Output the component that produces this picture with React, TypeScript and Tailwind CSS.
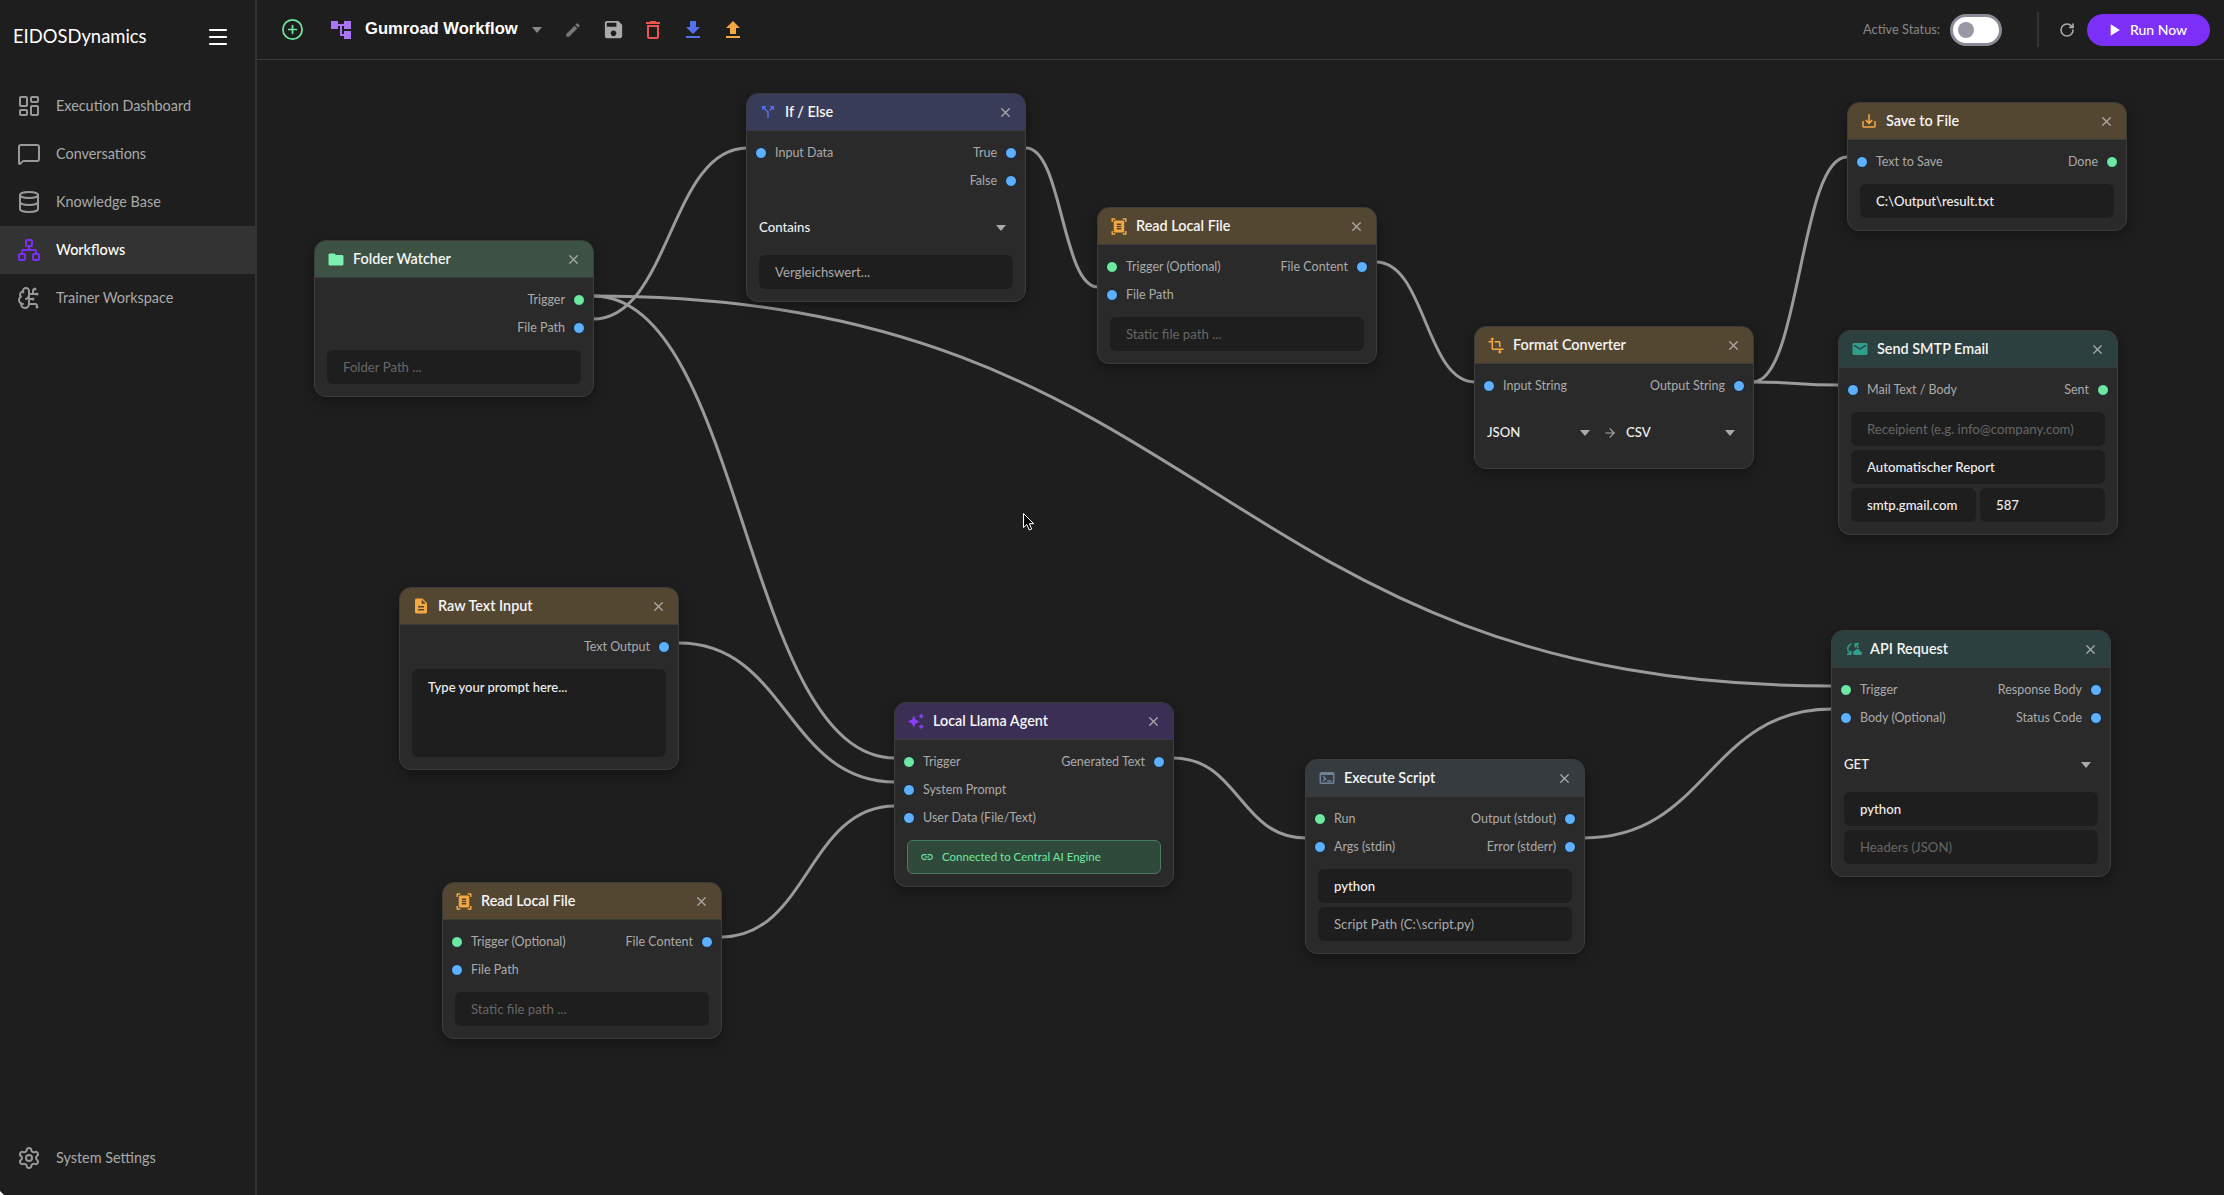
import type { ReactNode } from "react";
import {
  LayoutDashboard,
  MessageSquare,
  Database,
  Network,
  BrainCircuit,
  Settings,
  CirclePlus,
  Menu,
  RotateCw,
  X,
  ArrowRight,
} from "lucide-react";
import {
  MdAccountTree,
  MdEdit,
  MdSave,
  MdDeleteOutline,
  MdFileDownload,
  MdFileUpload,
  MdFolder,
  MdCallSplit,
  MdDocumentScanner,
  MdTransform,
  MdSaveAlt,
  MdDescription,
  MdAutoAwesome,
  MdEmail,
  MdCloudSync,
  MdTerminal,
  MdPlayArrow,
  MdLink,
} from "react-icons/md";

const navItems = [
  { label: "Execution Dashboard", icon: LayoutDashboard },
  { label: "Conversations", icon: MessageSquare },
  { label: "Knowledge Base", icon: Database },
  { label: "Workflows", icon: Network, active: true },
  { label: "Trainer Workspace", icon: BrainCircuit },
];

// page coordinates of each connection: start and end of the cubic
const edges = [
  [593, 296, 895, 758],
  [593, 296, 1832, 686],
  [593, 319, 747, 148],
  [1026, 148, 1098, 287],
  [1376, 262, 1475, 382],
  [1753, 382, 1847, 157],
  [1753, 382, 1838, 385],
  [679, 643, 895, 782],
  [721, 937, 895, 806],
  [1173, 758, 1306, 838],
  [1584, 838, 1832, 709],
];

function Port({ color }: { color: "green" | "blue" }) {
  return (
    <span
      className={`w-3 h-3 rounded-full border border-[#16202a] shrink-0 ${color === "green" ? "bg-[#6ee7a0]" : "bg-[#5cb0ff]"}`}
    />
  );
}

type RowProps = {
  left?: string;
  leftPort?: "green" | "blue";
  right?: string;
  rightPort?: "green" | "blue";
};

function Row({ left, leftPort = "blue", right, rightPort = "blue" }: RowProps) {
  return (
    <div className="h-7 flex items-center justify-between text-[12.5px] text-[#aaaaaa]">
      <div className="flex items-center gap-2 -ml-[4px]">
        {left && (
          <>
            <Port color={leftPort} />
            <span>{left}</span>
          </>
        )}
      </div>
      <div className="flex items-center gap-2 -mr-[4px]">
        {right && (
          <>
            <span>{right}</span>
            <Port color={rightPort} />
          </>
        )}
      </div>
    </div>
  );
}

function Field({
  children,
  tone = "value",
  className = "",
}: {
  children: ReactNode;
  tone?: "value" | "muted" | "hint";
  className?: string;
}) {
  const toneClass =
    tone === "value"
      ? "text-[#f0f0f0] font-medium"
      : tone === "muted"
        ? "text-[#aaaaaa]"
        : "text-[#666666]";
  return (
    <div
      className={`h-[34px] rounded-md bg-[#1e1e1e] pl-4 pt-[2px] flex items-center text-[13.2px] ${toneClass} ${className}`}
    >
      {children}
    </div>
  );
}

function Caret() {
  return (
    <span className="w-0 h-0 border-x-[5px] border-x-transparent border-t-[6px] border-t-[#aaaaaa]" />
  );
}

function Select({ label, className = "" }: { label: string; className?: string }) {
  return (
    <div
      className={`h-[34px] flex items-center justify-between text-[13.2px] font-medium text-[#f0f0f0] pr-[7px] ${className}`}
    >
      {label}
      <Caret />
    </div>
  );
}

function Node({
  title,
  icon,
  header,
  className,
  children,
}: {
  title: string;
  icon: ReactNode;
  header: string;
  className: string;
  children: ReactNode;
}) {
  return (
    <div
      className={`absolute w-[280px] rounded-xl border border-[#3c3c3c] bg-[#2a2a2a] shadow-[0_4px_12px_rgba(0,0,0,0.35)] overflow-hidden ${className}`}
    >
      <div
        className={`h-[37px] flex items-center px-[12px] border-b border-[#3c3c3c] ${header}`}
      >
        <span className="w-[18px] flex justify-center shrink-0">{icon}</span>
        <span className="ml-[8px] text-[14.4px] font-semibold text-[#f5f5f5] grow">
          {title}
        </span>
        <X size={15} strokeWidth={2} className="text-[#aaaaaa]" />
      </div>
      {children}
    </div>
  );
}

export default function App() {
  return (
    <div className="relative w-[2224px] h-[1195px] flex bg-[#1e1e1e] overflow-hidden font-['Lato',sans-serif]">
      {/* Sidebar */}
      <aside className="w-[257px] shrink-0 border-r-2 border-[#333333] flex flex-col">
        <div className="h-[74px] flex items-center justify-between pl-[13px] pr-[25px]">
          <span className="text-[18.4px] text-white">EIDOSDynamics</span>
          <Menu size={24} strokeWidth={2.2} className="text-white" />
        </div>
        <nav className="mt-[8px] flex flex-col">
          {navItems.map((item) => (
            <div
              key={item.label}
              className={`h-12 flex items-center pl-[17px] text-[14.4px] ${item.active ? "bg-[#333333] text-white font-medium" : "text-[#aaaaaa]"}`}
            >
              <item.icon
                size={24}
                strokeWidth={2}
                className={item.active ? "text-[#7c2df7]" : "text-[#999999]"}
              />
              <span className="ml-[15px]">{item.label}</span>
            </div>
          ))}
        </nav>
        <div className="mt-auto h-12 mb-[13px] flex items-center pl-[17px] text-[14.4px] text-[#aaaaaa]">
          <Settings size={24} strokeWidth={2} className="text-[#999999]" />
          <span className="ml-[15px]">System Settings</span>
        </div>
      </aside>

      <main className="grow flex flex-col min-w-0">
        {/* Toolbar */}
        <header className="h-[60px] shrink-0 border-b border-[#3a3a3a] flex items-center pl-[24px] pr-[14px]">
          <CirclePlus size={23} strokeWidth={1.8} className="text-[#6ee7a0]" />
          <MdAccountTree size={24} className="ml-[25px] text-[#a974f5]" />
          <span className="ml-[12px] text-[16.6px] font-bold text-white font-['Liberation_Sans',sans-serif]">
            Gumroad Workflow
          </span>
          <span className="ml-[14px] w-0 h-0 border-x-[5px] border-x-transparent border-t-[6px] border-t-[#888888]" />
          <MdEdit size={18} className="ml-[22px] text-[#777777]" />
          <MdSave size={23} className="ml-[20px] text-[#aaaaaa]" />
          <MdDeleteOutline size={24} className="ml-[16px] text-[#ef5350]" />
          <MdFileDownload size={24} className="ml-[16px] text-[#5470f0]" />
          <MdFileUpload size={24} className="ml-[16px] text-[#f5a742]" />

          <span className="ml-auto text-[12.8px] text-[#888888]">Active Status:</span>
          <div className="ml-[10px] w-[52px] h-[32px] rounded-full bg-white border-[3px] border-[#8a8a96] flex items-center pl-[5px]">
            <span className="w-4 h-4 rounded-full bg-[#9a98a5]" />
          </div>
          <span className="ml-[35px] w-0.5 h-[35px] bg-[#333333]" />
          <RotateCw size={16} strokeWidth={2.4} className="ml-[20px] text-[#aaaaaa]" />
          <button className="ml-[12px] w-[123px] h-8 rounded-full bg-[#7b2ff7] text-white text-sm font-medium flex items-center pl-[17px] gap-[6px]">
            <MdPlayArrow size={20} />
            Run Now
          </button>
        </header>

        {/* Canvas */}
        <div className="relative grow overflow-hidden">
          <svg
            className="absolute inset-0 w-full h-full"
            viewBox="257 60 1967 1135"
            fill="none"
          >
            {edges.map(([x1, y1, x2, y2], i) => {
              const mid = (x1 + x2) / 2;
              return (
                <path
                  key={i}
                  d={`M${x1} ${y1} C${mid} ${y1} ${mid} ${y2} ${x2} ${y2}`}
                  stroke="#9a9a9a"
                  strokeWidth={3}
                />
              );
            })}
          </svg>

          <Node
            title="Folder Watcher"
            header="bg-[#3d5245]"
            className="left-[57px] top-[180px]"
            icon={<MdFolder size={19} className="text-[#7df0b0]" />}
          >
            <div className="pt-[8px] px-[12px] pb-[12px]">
              <Row right="Trigger" rightPort="green" />
              <Row right="File Path" />
              <Field tone="hint" className="mt-[8px]">Folder Path ...</Field>
            </div>
          </Node>

          <Node
            title="If / Else"
            header="bg-[#383c58]"
            className="left-[489px] top-[33px]"
            icon={<MdCallSplit size={18} className="text-[#5470f0]" />}
          >
            <div className="pt-[8px] px-[12px] pb-[12px]">
              <Row left="Input Data" right="True" />
              <Row right="False" />
              <Select label="Contains" className="mt-[16px]" />
              <Field tone="muted" className="mt-[10px]">Vergleichswert...</Field>
            </div>
          </Node>

          <Node
            title="Read Local File"
            header="bg-[#544732]"
            className="left-[840px] top-[147px]"
            icon={<MdDocumentScanner size={19} className="text-[#f5a742]" />}
          >
            <div className="pt-[8px] px-[12px] pb-[12px]">
              <Row left="Trigger (Optional)" leftPort="green" right="File Content" />
              <Row left="File Path" />
              <Field tone="hint" className="mt-[8px]">Static file path ...</Field>
            </div>
          </Node>

          <Node
            title="Format Converter"
            header="bg-[#544732]"
            className="left-[1217px] top-[266px]"
            icon={<MdTransform size={19} className="text-[#f5a742]" />}
          >
            <div className="pt-[8px] px-[12px] pb-[18px]">
              <Row left="Input String" right="Output String" />
              <div className="mt-[16px] flex items-center gap-[9px]">
                <Select label="JSON" className="w-[107px] !pr-[4px]" />
                <ArrowRight size={14} className="text-[#aaaaaa] shrink-0" />
                <Select label="CSV" className="grow !pr-[6px]" />
              </div>
            </div>
          </Node>

          <Node
            title="Save to File"
            header="bg-[#544732]"
            className="left-[1590px] top-[42px]"
            icon={<MdSaveAlt size={18} className="text-[#f5a742]" />}
          >
            <div className="pt-[8px] px-[12px] pb-[12px]">
              <Row left="Text to Save" right="Done" rightPort="green" />
              <Field className="mt-[8px]">C:\Output\result.txt</Field>
            </div>
          </Node>

          <Node
            title="Send SMTP Email"
            header="bg-[#2c403f]"
            className="left-[1581px] top-[270px]"
            icon={<MdEmail size={18} className="text-[#2f9e8a]" />}
          >
            <div className="pt-[8px] px-[12px] pb-[12px]">
              <Row left="Mail Text / Body" right="Sent" rightPort="green" />
              <div className="mt-[8px] flex flex-col gap-1">
                <Field tone="hint">Receipient (e.g. info@company.com)</Field>
                <Field>Automatischer Report</Field>
                <div className="grid grid-cols-2 gap-1">
                  <Field>smtp.gmail.com</Field>
                  <Field>587</Field>
                </div>
              </div>
            </div>
          </Node>

          <Node
            title="Raw Text Input"
            header="bg-[#544732]"
            className="left-[142px] top-[527px]"
            icon={<MdDescription size={18} className="text-[#f5a742]" />}
          >
            <div className="pt-[8px] px-[12px] pb-[12px]">
              <Row right="Text Output" />
              <div className="mt-[8px] h-[88px] rounded-md bg-[#1e1e1e] pl-4 pt-[9px] text-[13px] font-medium text-[#f0f0f0]">
                Type your prompt here...
              </div>
            </div>
          </Node>

          <Node
            title="Local Llama Agent"
            header="bg-[#3b2f55]"
            className="left-[637px] top-[642px]"
            icon={<MdAutoAwesome size={19} className="text-[#8b3df7]" />}
          >
            <div className="pt-[8px] px-[12px] pb-[12px]">
              <Row left="Trigger" leftPort="green" right="Generated Text" />
              <Row left="System Prompt" />
              <Row left="User Data (File/Text)" />
              <div className="mt-[8px] h-[34px] rounded-md border border-[#4e7a5e] bg-[#2f4a3a] flex items-center pl-[12px] text-[11.5px] text-[#6ee7a0]">
                <MdLink size={14} />
                <span className="ml-[8px]">Connected to Central AI Engine</span>
              </div>
            </div>
          </Node>

          <Node
            title="Read Local File"
            header="bg-[#544732]"
            className="left-[185px] top-[822px]"
            icon={<MdDocumentScanner size={19} className="text-[#f5a742]" />}
          >
            <div className="pt-[8px] px-[12px] pb-[12px]">
              <Row left="Trigger (Optional)" leftPort="green" right="File Content" />
              <Row left="File Path" />
              <Field tone="hint" className="mt-[8px]">Static file path ...</Field>
            </div>
          </Node>

          <Node
            title="Execute Script"
            header="bg-[#363b40]"
            className="left-[1048px] top-[699px]"
            icon={<MdTerminal size={18} className="text-[#6b8299]" />}
          >
            <div className="pt-[8px] px-[12px] pb-[12px]">
              <Row left="Run" leftPort="green" right="Output (stdout)" />
              <Row left="Args (stdin)" right="Error (stderr)" />
              <div className="mt-[8px] flex flex-col gap-1">
                <Field>python</Field>
                <Field tone="muted">Script Path (C:\script.py)</Field>
              </div>
            </div>
          </Node>

          <Node
            title="API Request"
            header="bg-[#2c403f]"
            className="left-[1574px] top-[570px]"
            icon={<MdCloudSync size={18} className="text-[#2f9e8a]" />}
          >
            <div className="pt-[8px] px-[12px] pb-[12px]">
              <Row left="Trigger" leftPort="green" right="Response Body" />
              <Row left="Body (Optional)" right="Status Code" />
              <Select label="GET" className="mt-[16px]" />
              <div className="mt-[10px] flex flex-col gap-1">
                <Field>python</Field>
                <Field tone="hint">Headers (JSON)</Field>
              </div>
            </div>
          </Node>

          {/* mouse pointer */}
          <svg className="absolute left-[765px] top-[452px]" width="14" height="20" viewBox="0 0 14 20">
            <path d="M1.5 1.5v14l3.3-3 2.5 5.5 2.4-1-2.4-5.3h4.4z" fill="#000000" stroke="#ffffff" strokeWidth="1" />
          </svg>
        </div>
      </main>

      {/* window corner showing through at the bottom left */}
      <span className="absolute left-0 bottom-0 w-0 h-0 border-b-[4px] border-b-white border-r-[4px] border-r-transparent" />
    </div>
  );
}
